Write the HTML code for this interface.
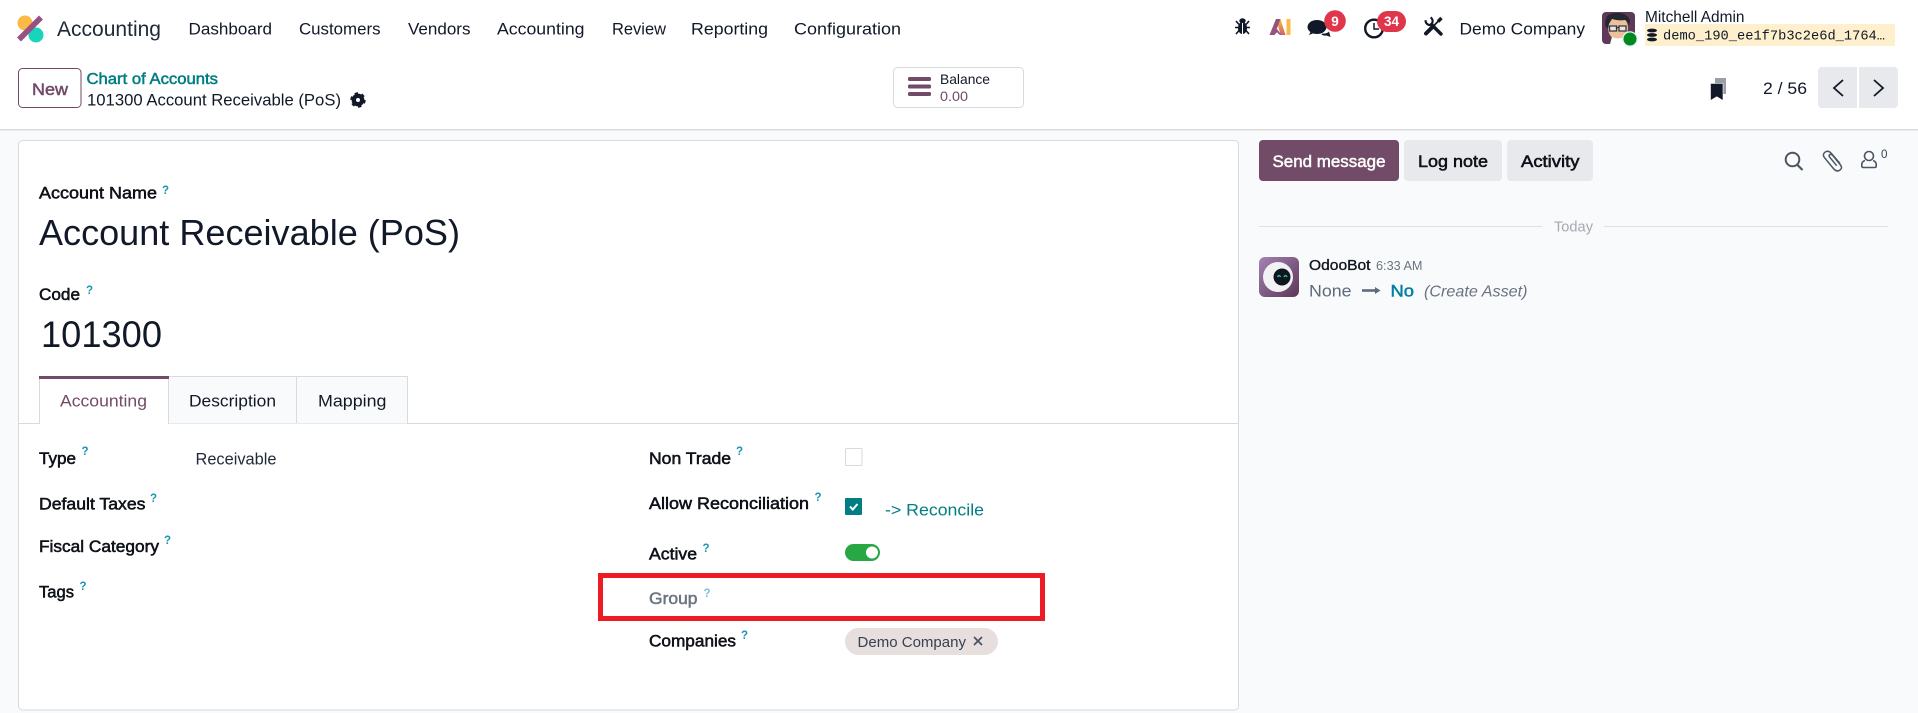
<!DOCTYPE html>
<html lang="en">
<head>
<meta charset="utf-8">
<title>Chart of Accounts</title>
<style>
html,body{margin:0;padding:0;width:1918px;height:713px;overflow:hidden;background:#f9fafb}
svg{display:block}
text{font-family:"Liberation Sans",sans-serif;font-size:17px;fill:#111827}
.semi{stroke:currentColor;stroke-width:.5px}
.q{font-size:11.5px;font-weight:700;fill:#1b94b4}
</style>
</head>
<body>
<svg width="1918" height="713" viewBox="0 0 1918 713" xmlns="http://www.w3.org/2000/svg">
<defs>
<linearGradient id="bot" x1="0" y1="0" x2="1" y2="1"><stop offset="0" stop-color="#a583b4"/><stop offset="1" stop-color="#5a3757"/></linearGradient>
<linearGradient id="aig" x1="0" y1="1" x2="0" y2="0"><stop offset="0" stop-color="#c5607a"/><stop offset=".6" stop-color="#ee9a45"/><stop offset="1" stop-color="#fbb945"/></linearGradient>
</defs>
<rect x="0" y="0" width="1918" height="129" fill="#fff"/>
<rect x="0" y="129" width="1918" height="1.5" fill="#d8dadd"/>

<!-- logo -->
<circle cx="25" cy="23" r="7.5" fill="#fbb945"/>
<circle cx="36" cy="35" r="7.5" fill="#1ad3bb"/>
<line x1="41" y1="17.5" x2="19" y2="39.5" stroke="#985184" stroke-width="5.6"/>
<text x="57" y="36" style="font-size:21px;fill:#1f2937" textLength="104" lengthAdjust="spacingAndGlyphs">Accounting</text>

<!-- nav -->
<text x="188.5" y="34.5" textLength="83.5" lengthAdjust="spacingAndGlyphs">Dashboard</text>
<text x="299" y="34.5" textLength="81.5" lengthAdjust="spacingAndGlyphs">Customers</text>
<text x="408" y="34.5" textLength="62.5" lengthAdjust="spacingAndGlyphs">Vendors</text>
<text x="497" y="34.5" textLength="87.5" lengthAdjust="spacingAndGlyphs">Accounting</text>
<text x="612" y="34.5" textLength="54" lengthAdjust="spacingAndGlyphs">Review</text>
<text x="691" y="34.5" textLength="77" lengthAdjust="spacingAndGlyphs">Reporting</text>
<text x="794" y="34.5" textLength="107" lengthAdjust="spacingAndGlyphs">Configuration</text>

<!-- bug -->
<g fill="#111827" stroke="#111827">
<ellipse cx="1242.5" cy="28" rx="4.6" ry="6" stroke="none"/>
<ellipse cx="1242.5" cy="20.8" rx="3.2" ry="2.6" stroke="none"/>
<path d="M1236 21l3 3.5M1249 21l-3 3.5M1235 27.5h4M1250 27.5h-4M1236 34l3-3.5M1249 34l-3-3.5" stroke-width="1.6" fill="none"/>
</g>
<line x1="1242.5" y1="23" x2="1242.5" y2="34" stroke="#fff" stroke-width="1"/>
<!-- AI -->
<path d="M1276 19h4.500l5 16h-4.800z" fill="url(#aig)"/>
<path d="M1276 19h4.500l-6 16h-5z" fill="#96527f"/>
<path d="M1272.500 35l4.500-6 4.500 6-2-.2-2.500-2.500-2.500 2.500z" fill="#96527f"/>
<rect x="1286.500" y="19" width="4" height="16" fill="#fbb945"/>
<!-- chat -->
<ellipse cx="1317" cy="27" rx="9.5" ry="7" fill="#111827"/>
<path d="M1311 31l-2 4 5-2z" fill="#111827"/>
<path d="M1322 33.5q5 .5 7-2l1.500 5.500-4-1.500q-3 .5-5-1z" fill="#111827"/>
<circle cx="1335" cy="21" r="10.8" fill="#e0364c"/>
<text x="1335" y="26" text-anchor="middle" style="font-size:13.5px;font-weight:700;fill:#fff">9</text>
<!-- clock -->
<circle cx="1374" cy="28.5" r="8.8" fill="#fff" stroke="#111827" stroke-width="2.4"/>
<path d="M1374 23v6h5" fill="none" stroke="#111827" stroke-width="1.5"/>
<rect x="1377" y="11" width="29" height="21" rx="10.5" fill="#e0364c"/>
<text x="1391.5" y="26" text-anchor="middle" style="font-size:13.5px;font-weight:700;fill:#fff">34</text>
<!-- tools -->
<g stroke="#111827" fill="none">
<path d="M1431.500 24.500l9.500 9.500" stroke-width="3.400" stroke-linecap="round"/>
<path d="M1425.700 20.200a4.300 4.300 0 0 0 5.800 4.600l.9-2.400a4.300 4.300 0 0 0-1.800-5" stroke-width="2.200"/>
<path d="M1426 33.500l7-7" stroke-width="4" stroke-linecap="round"/>
<path d="M1433 26.500l5.500-5.500" stroke-width="1.800"/>
<path d="M1438 21.500l3.500-3.500" stroke-width="3.400"/>
</g>
<text x="1459.5" y="34.5" textLength="125.5" lengthAdjust="spacingAndGlyphs">Demo Company</text>

<!-- avatar -->
<rect x="1602" y="12" width="33" height="32" rx="4" fill="#5d3a5a"/>
<ellipse cx="1618" cy="28" rx="10" ry="12" fill="#ecc09c"/>
<path d="M1605.500 26q-2-12 9-13 13-1 15.500 8l-1 5q-1-5-4-6-7 1-13-1-2 3-3 5l-1 5z" fill="#252830"/>
<path d="M1609.500 26h7v5h-7zM1619 26h7v5h-7zM1616.500 27.500h2.500" fill="#e9e4df" stroke="#34363c" stroke-width="1.300"/>
<path d="M1612 37q6 3 12 0l2 7h-16z" fill="#fff"/>
<circle cx="1630" cy="39" r="7.8" fill="#dff3f6"/>
<circle cx="1630" cy="39" r="6.5" fill="#008a1e"/>
<text x="1645" y="22" style="font-size:15.5px" textLength="99.5" lengthAdjust="spacingAndGlyphs">Mitchell Admin</text>
<rect x="1645" y="24" width="250" height="22" fill="#fef0cd"/>
<g fill="#111827">
<ellipse cx="1652" cy="30.5" rx="5" ry="1.9"/>
<ellipse cx="1652" cy="35" rx="5" ry="1.9"/>
<ellipse cx="1652" cy="39.5" rx="5" ry="1.9"/>
</g>
<text x="1663" y="39.5" style="font-family:'Liberation Mono',monospace;font-size:13.7px" textLength="222" lengthAdjust="spacingAndGlyphs">demo_190_ee1f7b3c2e6d_1764…</text>

<!-- control panel -->
<rect x="18.5" y="68.5" width="62.5" height="39" rx="4" fill="#fff" stroke="#714b67"/>
<text x="32" y="95" class="semi" style="color:#714b67;fill:#714b67" textLength="36" lengthAdjust="spacingAndGlyphs">New</text>
<text x="86.5" y="84" class="semi" style="font-size:15.5px;color:#017e84;fill:#017e84" textLength="131.5" lengthAdjust="spacingAndGlyphs">Chart of Accounts</text>
<text x="87" y="105.5" style="font-size:16.5px" textLength="254" lengthAdjust="spacingAndGlyphs">101300 Account Receivable (PoS)</text>
<!-- gear -->
<circle cx="358" cy="100" r="4.2" fill="none" stroke="#111827" stroke-width="4.4"/>
<circle cx="358" cy="100" r="6.4" fill="none" stroke="#111827" stroke-width="2.6" stroke-dasharray="3.2 3.5"/>

<rect x="893.5" y="67.5" width="130" height="40" rx="4" fill="#fff" stroke="#d8dadd"/>
<rect x="908" y="77" width="23" height="4" rx="1.500" fill="#714b67"/>
<rect x="908" y="84.500" width="23" height="4" rx="1.500" fill="#714b67"/>
<rect x="908" y="92" width="23" height="4" rx="1.500" fill="#714b67"/>
<text x="940" y="84" style="font-size:14px" textLength="50" lengthAdjust="spacingAndGlyphs">Balance</text>
<text x="940" y="101" style="font-size:14px;fill:#714b67" textLength="28" lengthAdjust="spacingAndGlyphs">0.00</text>

<!-- pager -->
<path d="M1715 78h11v16h-11z" fill="#9a9ea6"/>
<path d="M1710.500 83.500h12.500v17l-6.200-3.800-6.300 3.800z" fill="#111827" stroke="#fff" stroke-width=".6"/>
<text x="1763" y="94" textLength="44" lengthAdjust="spacingAndGlyphs">2 / 56</text>
<path d="M1822 67h35v41h-35a4 4 0 0 1-4-4v-33a4 4 0 0 1 4-4z" fill="#e7e9ed"/>
<path d="M1859 67h35a4 4 0 0 1 4 4v33a4 4 0 0 1-4 4h-35z" fill="#e7e9ed"/>
<path d="M1843 80l-9 8 9 8" fill="none" stroke="#111827" stroke-width="1.800"/>
<path d="M1874 80l9 8-9 8" fill="none" stroke="#111827" stroke-width="1.800"/>

<!-- form sheet -->
<rect x="18.5" y="140.5" width="1220" height="569.5" rx="4" fill="#fff" stroke="#d8dadd"/>
<text x="39" y="198.5" class="semi" textLength="118" lengthAdjust="spacingAndGlyphs">Account Name</text>
<text x="162" y="194" class="q">?</text>
<text x="39" y="245" style="font-size:36px" textLength="421" lengthAdjust="spacingAndGlyphs">Account Receivable (PoS)</text>
<text x="39" y="300" class="semi" textLength="41" lengthAdjust="spacingAndGlyphs">Code</text>
<text x="86" y="294" class="q">?</text>
<text x="41" y="347" style="font-size:37px" textLength="121" lengthAdjust="spacingAndGlyphs">101300</text>

<!-- tabs -->
<line x1="18" y1="423.5" x2="1239" y2="423.5" stroke="#d8dadd"/>
<path d="M168.5 423.5V376.5H407.5V423.5" fill="#f9fafb" stroke="#d8dadd"/>
<line x1="296.5" y1="376" x2="296.5" y2="423" stroke="#d8dadd"/>
<rect x="39.5" y="378" width="129" height="46" fill="#fff"/>
<path d="M39.5 424V378M168.5 424V378" stroke="#d8dadd" fill="none"/>
<rect x="39" y="376" width="130" height="3" fill="#714b67"/>
<text x="60" y="406.5" style="fill:#714b67" textLength="87" lengthAdjust="spacingAndGlyphs">Accounting</text>
<text x="189" y="406.5" textLength="87" lengthAdjust="spacingAndGlyphs">Description</text>
<text x="318" y="406.5" textLength="68.5" lengthAdjust="spacingAndGlyphs">Mapping</text>

<!-- left fields -->
<text x="39" y="464" class="semi" textLength="37" lengthAdjust="spacingAndGlyphs">Type</text>
<text x="81.5" y="455" class="q">?</text>
<text x="195.5" y="464.5" style="fill:#1f2937" textLength="81" lengthAdjust="spacingAndGlyphs">Receivable</text>
<text x="39" y="509.5" class="semi" textLength="106.500" lengthAdjust="spacingAndGlyphs">Default Taxes</text>
<text x="150" y="502" class="q">?</text>
<text x="39" y="552" class="semi" textLength="120" lengthAdjust="spacingAndGlyphs">Fiscal Category</text>
<text x="164" y="544" class="q">?</text>
<text x="39" y="597.5" class="semi" textLength="35" lengthAdjust="spacingAndGlyphs">Tags</text>
<text x="79.5" y="590" class="q">?</text>

<!-- right fields -->
<text x="649" y="464" class="semi" textLength="82" lengthAdjust="spacingAndGlyphs">Non Trade</text>
<text x="736" y="455" class="q">?</text>
<rect x="845.5" y="448.5" width="16.5" height="17" rx="1" fill="#fff" stroke="#d8dadd"/>
<text x="649" y="509" class="semi" textLength="160" lengthAdjust="spacingAndGlyphs">Allow Reconciliation</text>
<text x="814.5" y="501" class="q">?</text>
<rect x="845" y="498" width="17" height="17" rx="1" fill="#017e84"/>
<path d="M850 506.500l2.800 3 4.700-5.500" fill="none" stroke="#fff" stroke-width="2"/>
<text x="885" y="515.5" style="fill:#017e84" textLength="99" lengthAdjust="spacingAndGlyphs">-&gt; Reconcile</text>
<text x="649" y="559.5" class="semi" textLength="48" lengthAdjust="spacingAndGlyphs">Active</text>
<text x="702.5" y="552" class="q">?</text>
<rect x="845" y="544" width="35" height="17" rx="8.5" fill="#28a745"/>
<circle cx="872" cy="552.5" r="6" fill="#fff"/>

<text x="649" y="604" class="semi" style="color:#6b7280;fill:#6b7280" textLength="48.5" lengthAdjust="spacingAndGlyphs">Group</text>
<text x="703.5" y="597" class="q" style="fill:#7cc0d5">?</text>
<rect x="600.5" y="575.5" width="442" height="43" fill="none" stroke="#ed1c24" stroke-width="5"/>

<text x="649" y="646.5" class="semi" textLength="87" lengthAdjust="spacingAndGlyphs">Companies</text>
<text x="741" y="639" class="q">?</text>
<rect x="845" y="628" width="153" height="27" rx="13.5" fill="#e6dfdd"/>
<text x="857.5" y="647" style="font-size:15px;fill:#374151" textLength="108.5" lengthAdjust="spacingAndGlyphs">Demo Company</text>
<path d="M974 637l8 8M982 637l-8 8" stroke="#4b5563" stroke-width="1.800" fill="none"/>

<!-- chatter buttons -->
<rect x="1259" y="140" width="140" height="41" rx="4" fill="#714b67"/>
<text x="1272.5" y="167" class="semi" style="color:#fff;fill:#fff" textLength="113" lengthAdjust="spacingAndGlyphs">Send message</text>
<rect x="1404" y="140" width="98" height="41" rx="4" fill="#e7e9ed"/>
<text x="1418" y="167" class="semi" textLength="70" lengthAdjust="spacingAndGlyphs">Log note</text>
<rect x="1507" y="140" width="86" height="41" rx="4" fill="#e7e9ed"/>
<text x="1521" y="167" class="semi" textLength="58.5" lengthAdjust="spacingAndGlyphs">Activity</text>

<!-- chatter icons -->
<g fill="none" stroke="#4b5563">
<circle cx="1792.5" cy="159.5" r="6.8" stroke-width="2"/>
<path d="M1797.5 165l5 5" stroke-width="2.200"/>
<path d="M1840 163.500l-9-10.500q-3-3-6-.8-3 2.300-.5 5.500l9.500 11.500q3 3 6 .8 2.800-2.200 .5-5l-8-9.800q-1.500-1.500-2.800-.5-1.200 1 0 2.500l7 8.500" stroke-width="1.500"/>
<circle cx="1869" cy="156" r="4.500" stroke-width="1.600"/>
<path d="M1865 160.500q-3.200 1-3.200 4v1.500q0 1.500 1.500 1.500h11.400q1.500 0 1.500-1.500v-1.500q0-3-3.200-4" stroke-width="1.600"/>
</g>
<text x="1881" y="158" style="font-size:12px;fill:#374151" textLength="6.5" lengthAdjust="spacingAndGlyphs">0</text>

<!-- today -->
<line x1="1259" y1="226.5" x2="1542.5" y2="226.5" stroke="#dee0e3"/>
<line x1="1604" y1="226.5" x2="1888" y2="226.5" stroke="#dee0e3"/>
<text x="1554" y="231.5" style="font-size:15px;fill:#a4a9b1" textLength="39" lengthAdjust="spacingAndGlyphs">Today</text>

<!-- message -->
<rect x="1259" y="257" width="40" height="40" rx="6" fill="url(#bot)"/>
<circle cx="1278" cy="277" r="15" fill="#f2f2f4"/>
<circle cx="1282" cy="277" r="8.5" fill="#11161c"/>
<path d="M1277.500 277q1.500-3 3 0M1284 277q1.500-3 3 0" stroke="#1ad3bb" stroke-width="1.300" fill="none"/>
<text x="1309" y="270" class="semi" style="font-size:15px;stroke-width:.3px" textLength="61.500" lengthAdjust="spacingAndGlyphs">OdooBot</text>
<text x="1376" y="270" style="font-size:12.5px;fill:#6b7280" textLength="46.5" lengthAdjust="spacingAndGlyphs">6:33 AM</text>
<text x="1309" y="296.5" style="fill:#5f6b7a" textLength="42.5" lengthAdjust="spacingAndGlyphs">None</text>
<path d="M1362 290.500h14" stroke="#5f6b7a" stroke-width="2.600" fill="none"/>
<path d="M1375 287l5.500 3.500-5.500 3.500z" fill="#5f6b7a"/>
<text x="1390.5" y="296.5" class="semi" style="color:#017ea5;fill:#017ea5" textLength="23.5" lengthAdjust="spacingAndGlyphs">No</text>
<text x="1424" y="296.5" style="font-style:italic;font-size:16px;fill:#6b7280" textLength="103.5" lengthAdjust="spacingAndGlyphs">(Create Asset)</text>
</svg>
</body>
</html>
